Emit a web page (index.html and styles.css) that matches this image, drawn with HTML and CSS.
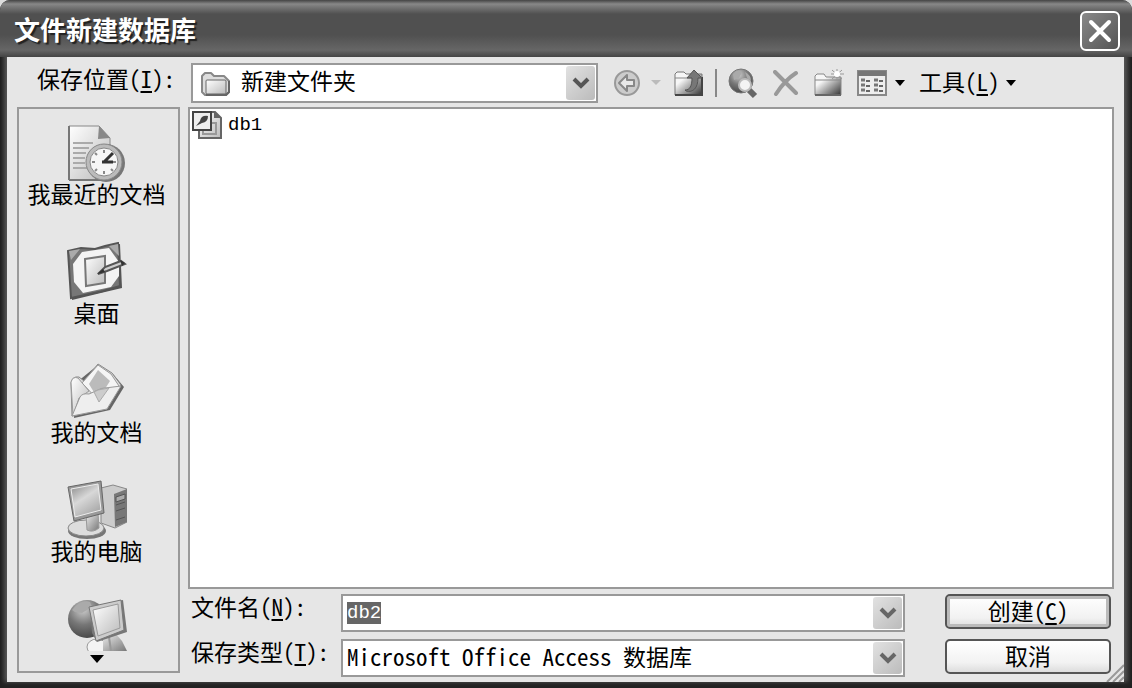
FILE: index.html
```html
<!DOCTYPE html>
<html lang="zh-CN">
<head>
  <meta charset="UTF-8">
  <title>文件新建数据库</title>
  <link rel="stylesheet" href="styles.css">
</head>
<body>

<!-- shared gradients -->
<svg class="defs" width="0" height="0" aria-hidden="true">
  <defs>
    <linearGradient id="paper" x1="0" y1="0" x2="1" y2="1">
      <stop offset="0" stop-color="#fff"/><stop offset="1" stop-color="#bbb"/>
    </linearGradient>
    <linearGradient id="metal" x1="0" y1="0" x2="1" y2="1">
      <stop offset="0" stop-color="#eee"/><stop offset="1" stop-color="#777"/>
    </linearGradient>
    <linearGradient id="folder" x1="0" y1="0" x2="1" y2="1">
      <stop offset="0.3" stop-color="#f6f6f6"/><stop offset="1" stop-color="#333"/>
    </linearGradient>
    <linearGradient id="screen" x1="0" y1="0" x2="0.6" y2="1">
      <stop offset="0" stop-color="#888"/><stop offset="0.5" stop-color="#d8d8d8"/><stop offset="1" stop-color="#aaa"/>
    </linearGradient>
    <radialGradient id="ball" cx="0.4" cy="0.25" r="0.8">
      <stop offset="0" stop-color="#ccc"/><stop offset="0.5" stop-color="#777"/><stop offset="1" stop-color="#444"/>
    </radialGradient>
  </defs>
</svg>

<div class="window">
  <header class="titlebar">
    <h1>文件新建数据库</h1>
    <button class="close" aria-label="关闭">
      <svg width="24" height="24" viewBox="0 0 24 24"><path d="M3 3L21 21M21 3L3 21" stroke="#fff" stroke-width="4" stroke-linecap="round"/></svg>
    </button>
  </header>

  <main class="client">
    <div class="toolbar">
      <label for="folder">保存位置(<u>I</u>):</label>
      <div class="combo folder-combo">
        <svg class="folder-icon" width="30" height="26" viewBox="0 0 30 26">
          <path d="M1 21V5L4 2H10L13 5H23L28 10V21L25 24H4Z" fill="#ddd" stroke="#888" stroke-width="2" stroke-linejoin="round"/>
          <path d="M28 10V21L25 24H5" stroke="#666" stroke-width="2"/>
          <rect x="5" y="9" width="20" height="14" rx="1" fill="url(#paper)" stroke="#666"/>
        </svg>
        <select id="folder"><option>新建文件夹</option></select>
        <span class="arrow"><svg width="18" height="14" viewBox="0 0 18 14"><path d="M2 3L9 10L16 3" fill="none" stroke="#555" stroke-width="4"/></svg></span>
      </div>

      <div class="tools">
        <button class="tool" aria-label="后退">
          <svg width="28" height="28" viewBox="0 0 28 28">
            <circle cx="14" cy="14" r="12" fill="#ccc" stroke="#999" stroke-width="2"/>
            <path d="M6 14L14 6V11H21V17H14V22Z" fill="#e8e8e8" stroke="#888" stroke-width="2" stroke-linejoin="round"/>
          </svg>
        </button>
        <button class="tool drop" aria-label="后退列表">
          <svg width="10" height="6" viewBox="0 0 10 6"><path d="M0 0H10L5 5Z" fill="#bbb"/></svg>
        </button>
        <button class="tool up" aria-label="向上一级">
          <svg width="32" height="28" viewBox="0 0 32 28">
            <path d="M2 26V5L4 3H11L13 5H29V26Z" fill="url(#folder)" stroke="#777"/>
            <path d="M2 9H28" stroke="#888"/>
            <path d="M2 26H29V8" stroke="#444" stroke-width="2"/>
            <path d="M12 21C17 21 19 17 19 9H14L21 1L29 9H25C25 19 20 24 13 22Z" fill="#777" stroke="#555"/>
          </svg>
        </button>
        <span class="sep"></span>
        <button class="tool search" aria-label="搜索 Web">
          <svg width="32" height="32" viewBox="0 0 32 32">
            <circle cx="14" cy="14" r="12" fill="url(#ball)" stroke="#777"/>
            <path d="M6 7Q11 2 15 5L12 11L7 13ZM18 5Q24 8 24 14L20 11Z" fill="#aaa"/>
            <path d="M22 23L28 29" stroke="#666" stroke-width="6"/>
            <circle cx="18" cy="18" r="6" fill="#f4f4f4" stroke="#bbb" stroke-width="2"/>
          </svg>
        </button>
        <button class="tool delete" aria-label="删除">
          <svg width="26" height="26" viewBox="0 0 26 26"><path d="M2 2Q12 12 23 23M23 3Q12 10 3 24" fill="none" stroke="#999" stroke-width="4" stroke-linecap="round"/></svg>
        </button>
        <button class="tool new" aria-label="新建文件夹">
          <svg width="32" height="28" viewBox="0 0 32 28">
            <path d="M2 26V7L4 5H11L13 8H28V26Z" fill="url(#folder)" stroke="#888"/>
            <path d="M2 11H28" stroke="#888"/>
            <path d="M2 26H28" stroke="#666" stroke-width="2"/>
            <path d="M24 0V11M18 5H31M19 1L29 10M29 1L19 10" stroke="#999"/>
            <circle cx="24" cy="5" r="3" fill="#fff"/>
          </svg>
        </button>
        <button class="tool views" aria-label="视图">
          <svg width="30" height="26" viewBox="0 0 30 26">
            <rect x="1" y="1" width="28" height="24" fill="#eee" stroke="#888" stroke-width="2"/>
            <rect x="1" y="1" width="28" height="5" fill="#777"/>
            <path d="M4 10H8M4 15H8M4 20H8M17 10H21M17 15H21M17 20H21" stroke="#777" stroke-width="3"/>
            <path d="M9 11H13M9 16H13M9 21H13M22 11H26M22 16H26M22 21H26" stroke="#666" stroke-width="2"/>
          </svg>
        </button>
        <button class="tool drop" aria-label="视图列表">
          <svg width="10" height="6" viewBox="0 0 10 6"><path d="M0 0H10L5 6Z"/></svg>
        </button>
        <button class="tool menu"><span>工具(<u>L</u>)</span>
          <svg width="10" height="6" viewBox="0 0 10 6"><path d="M0 0H10L5 6Z"/></svg>
        </button>
      </div>
    </div>

    <div class="body">
      <nav class="places">
        <button class="place">
          <svg width="60" height="60" viewBox="0 0 60 60">
            <path d="M2 3H32L43 15V57H2Z" fill="url(#paper)" stroke="#888"/>
            <path d="M2 57H43M2 3V57" stroke="#777" stroke-width="2"/>
            <path d="M32 3L31 16L43 15Z" fill="#888"/>
            <path d="M6 20H26M6 25H22M6 30H19M6 35H18M6 40H18M6 45H20" stroke="#aaa" stroke-width="2"/>
            <circle cx="39" cy="40" r="19" fill="#777"/>
            <circle cx="37" cy="39" r="18" fill="#bbb" stroke="#888"/>
            <circle cx="37" cy="39" r="14" fill="#f6f6f6" stroke="#888"/>
            <path d="M37 27V30M37 48V51M25 39H28M46 39H49M28 30L30 32M46 48L44 46M28 48L30 46" stroke="#888" stroke-width="2"/>
            <path d="M46 30L37 39M35 39H46" fill="none" stroke="#333" stroke-width="3"/>
          </svg>
          <span>我最近的文档</span>
        </button>
        <button class="place">
          <svg width="60" height="60" viewBox="0 0 60 60">
            <path d="M2 10L14 6L28 7L38 4L53 2L55 46L38 50L5 58Z" fill="#555"/>
            <path d="M1 9L14 6L28 7L38 4L51 1L53 44L36 49L4 56Z" fill="#777" stroke="#555" stroke-width="2"/>
            <path d="M2 9L13 7L4 18ZM51 2L42 4L52 14Z" fill="#aaa"/>
            <path d="M15 10L42 6L52 20L52 34L44 45L16 51L7 40L6 22Z" fill="#f4f4f4"/>
            <path d="M18 17L38 14V41L19 44Z" fill="url(#paper)" stroke="#777" stroke-width="2"/>
            <path d="M31 32L38 25L54 19L58 22L40 29Z" fill="#ccc" stroke="#555" stroke-width="2"/>
            <path d="M30 32L36 27L38 30ZM53 18L58 21L55 24Z" fill="#333"/>
          </svg>
          <span>桌面</span>
        </button>
        <button class="place">
          <svg width="60" height="60" viewBox="0 0 60 60">
            <path d="M7 57L43 49L57 26L46 13L31 4L10 21Z" fill="#666"/>
            <path d="M5 55L4 22Q5 15 12 16L17 20L31 3L45 12L54 24L40 48Z" fill="#ddd" stroke="#888"/>
            <path d="M15 22L31 4L44 13L52 25L33 41Z" fill="#f5f5f5" stroke="#999"/>
            <path d="M22 23L31 9L43 20L36 31L28 33Z" fill="#bbb"/>
            <path d="M4 21Q6 15 11 17L22 30L12 37L6 55Z" fill="url(#paper)" stroke="#999"/>
            <path d="M5 55L13 36Q15 32 22 33L31 29Q34 27 38 27L54 25L40 48Z" fill="#eee" stroke="#999"/>
            <path d="M27 31L32 41L42 27L31 29Z" fill="#ccc" stroke="#aaa"/>
          </svg>
          <span>我的文档</span>
        </button>
        <button class="place">
          <svg width="60" height="60" viewBox="0 0 60 60">
            <path d="M34 8L46 5L60 9V42L48 48L34 43Z" fill="#ccc" stroke="#888"/>
            <path d="M47 14L60 9V42L48 47Z" fill="#777"/>
            <path d="M49 17L58 14V19L49 22ZM49 25L58 22M49 31L58 28M49 40L58 37" fill="#aaa" stroke="#555"/>
            <ellipse cx="20" cy="51" rx="19" ry="8" fill="#777"/>
            <ellipse cx="19" cy="48" rx="18" ry="8" fill="#ddd" stroke="#888"/>
            <path d="M19 34L31 33L32 48Q26 53 20 50Z" fill="url(#metal)" stroke="#999"/>
            <path d="M1 7L34 1L37 33L7 41Z" fill="#999" stroke="#666"/>
            <path d="M4 9L31 4L34 30L8 37Z" fill="url(#screen)" stroke="#eee"/>
          </svg>
          <span>我的电脑</span>
        </button>
        <button class="place cut" aria-label="网上邻居">
          <svg width="60" height="52" viewBox="0 0 60 52">
            <ellipse cx="30" cy="48" rx="10" ry="8" fill="#f4f4f4" stroke="#999"/>
            <path d="M36 41L49 35L55 42L60 52H36Z" fill="url(#metal)"/>
            <path d="M42 38L44 52" stroke="#999" stroke-width="2"/>
            <circle cx="20" cy="20" r="19" fill="url(#ball)"/>
            <path d="M5 11Q14 0 23 3L25 8L15 14L8 13Z" fill="#aaa"/>
            <path d="M23 8L56 1L60 33L30 43L25 34Z" fill="#777"/>
            <path d="M22 8L54 1L57 31L29 42Z" fill="#ccc" stroke="#777"/>
            <path d="M26 11L51 5L53 29L31 37Z" fill="url(#paper)" stroke="#999"/>
          </svg>
        </button>
        <button class="more" aria-label="向下滚动">
          <svg width="14" height="8" viewBox="0 0 14 8"><path d="M0 0H14L7 8Z"/></svg>
        </button>
      </nav>

      <div class="content">
        <ul class="files">
          <li class="file">
            <svg width="32" height="30" viewBox="0 0 32 30">
              <path d="M7 2H23L29 8V28H7Z" fill="url(#paper)" stroke="#666" stroke-width="2"/>
              <path d="M22 2V8H29Z" fill="#666"/>
              <path d="M11 20V24H24V13H20" fill="none" stroke="#999" stroke-width="2"/>
              <rect x="1" y="2" width="18" height="18" fill="#eee" stroke="#444" stroke-width="2"/>
              <path d="M4 16L8 11Q9 5 16 6Q16 12 10 13Z" fill="#444"/>
            </svg>
            <span>db1</span>
          </li>
        </ul>

        <form class="form" onsubmit="return false">
          <label for="name">文件名(<u>N</u>):</label>
          <div class="combo">
            <input type="text" id="name" value="db2" autocomplete="off" spellcheck="false">
            <span class="arrow"><svg width="18" height="14" viewBox="0 0 18 14"><path d="M2 3L9 10L16 3" fill="none" stroke="#666" stroke-width="4"/></svg></span>
          </div>
          <button class="btn default" type="submit">创建(<u>C</u>)</button>

          <label for="type">保存类型(<u>T</u>):</label>
          <div class="combo">
            <select id="type"><option>Microsoft Office Access 数据库</option></select>
            <span class="arrow"><svg width="18" height="14" viewBox="0 0 18 14"><path d="M2 3L9 10L16 3" fill="none" stroke="#666" stroke-width="4"/></svg></span>
          </div>
          <button class="btn" type="button">取消</button>
        </form>
      </div>
    </div>

    <svg class="grip" width="18" height="18" viewBox="0 0 18 18"><path d="M1 18L18 1M7 18L18 7M13 18L18 13" stroke="#999" stroke-width="2"/></svg>
  </main>
</div>

<script>
  const nameBox = document.getElementById('name');
  nameBox.focus();
  nameBox.select();
</script>
</body>
</html>
```

FILE: styles.css
```css
* { box-sizing: border-box; }
body { margin: 0; background: #ddd; }
body, button, input, select {
  font-family: "Noto Sans CJK SC", sans-serif;
  font-size: 23px;
  line-height: 24px;
  font-feature-settings: "hwid"; /* half-width latin next to full-width hanzi */
  font-variant-ligatures: none;
  color: #000;
}
button { border: none; background: none; padding: 0; }
svg { display: block; fill: none; flex: none; }
svg path:not([fill]):not([stroke]) { fill: #000; }
u { text-underline-offset: 3px; text-decoration-thickness: 2px; }
.defs { position: absolute; }

.window {
  min-height: 100vh;
  display: flex;
  flex-direction: column;
  padding: 0 8px 6px 7px;
  background: linear-gradient(to right, #1c1c1c, #555 7px, #555 calc(100% - 8px), #1c1c1c);
  border-radius: 10px 10px 0 0;
  box-shadow: inset 0 -6px 4px #222;
}
.titlebar {
  height: 57px;
  margin: 0 -8px 0 -7px;
  padding: 5px 12px 0 14px;
  display: flex;
  align-items: center;
  justify-content: space-between;
  border-radius: 10px 10px 0 0;
  background: linear-gradient(#444, #888 4px, #777 7px, #505050 14px, #505050 35px, #666 50px, #444);
}
.titlebar h1 { margin: 0; padding-bottom: 4px; font-size: 26px; line-height: 32px; color: #fff; text-shadow: 2px 2px 1px #222; }
.close {
  width: 40px;
  height: 40px;
  display: grid;
  place-items: center;
  border: 2px solid #fff;
  border-radius: 6px;
  background: linear-gradient(135deg, #888, #555);
}

.client {
  flex: 1;
  position: relative;
  display: flex;
  flex-direction: column;
  padding: 6px 10px 5px;
  background: #e6e6e6;
}
.toolbar { display: flex; align-items: center; margin-bottom: 4px; }
.toolbar label { width: 174px; padding: 0 0 10px 20px; }
.combo { position: relative; height: 38px; border: 2px solid #999; background: #fff; }
.combo input, .combo select {
  width: 100%;
  height: 100%;
  padding: 0 36px 4px 4px;
  border: none;
  outline: none;
  background: transparent;
  appearance: none;
}
.combo input, .file span { font-family: "Liberation Mono", monospace; font-size: 19px; }
.combo ::selection { background: #666; color: #fff; }
.arrow {
  position: absolute;
  top: 1px;
  right: 1px;
  bottom: 1px;
  width: 29px;
  display: grid;
  place-items: center;
  border-radius: 3px;
  background: linear-gradient(135deg, #e2e2e2, #bbb);
  pointer-events: none;
}
.folder-combo { width: 407px; height: 40px; }
.folder-combo select { padding-left: 48px; padding-bottom: 6px; }
.folder-icon { position: absolute; left: 8px; top: 6px; }

.tools { display: flex; align-items: center; margin-left: 15px; }
.tool { display: flex; align-items: center; }
.drop { margin-left: 10px; }
.up { margin-left: 12px; }
.sep { width: 2px; height: 28px; margin: 0 10px; background: #888; }
.delete { margin-left: 14px; }
.new { margin-left: 14px; }
.views { margin-left: 12px; }
.views + .drop { margin-left: 8px; }
.menu { margin-left: 14px; }
.menu span { padding-bottom: 4px; }
.menu svg { margin-left: 6px; }

.body { flex: 1; display: flex; gap: 8px; }
.places {
  width: 163px;
  display: flex;
  flex-direction: column;
  align-items: center;
  padding: 14px 4px 0 0;
  margin-bottom: 4px;
  border: 2px solid #999;
}
.place { display: flex; flex-direction: column; align-items: center; margin-bottom: 37px; }
.place svg { margin-bottom: -2px; }
.cut { margin-bottom: 6px; }

.content { flex: 1; display: flex; flex-direction: column; }
.files { flex: 1; margin: 0; padding: 1px 2px; list-style: none; border: 2px solid #999; background: #fff; }
.file { display: flex; align-items: center; gap: 4px; }

.form {
  display: grid;
  grid-template-columns: 152px 1fr 166px;
  align-items: start;
  row-gap: 7px;
  padding: 5px 3px 0 1px;
}
.form label { padding-left: 2px; }
.btn {
  height: 35px;
  padding-bottom: 4px;
  border: 2px solid #555;
  border-radius: 5px;
  background: linear-gradient(#fff, #f2f2f2 70%, #ddd);
}
.form .combo { margin-right: 40px; }
.default { box-shadow: inset 0 0 0 3px #bbb; }
.grip { position: absolute; right: 0; bottom: 0; }
```
